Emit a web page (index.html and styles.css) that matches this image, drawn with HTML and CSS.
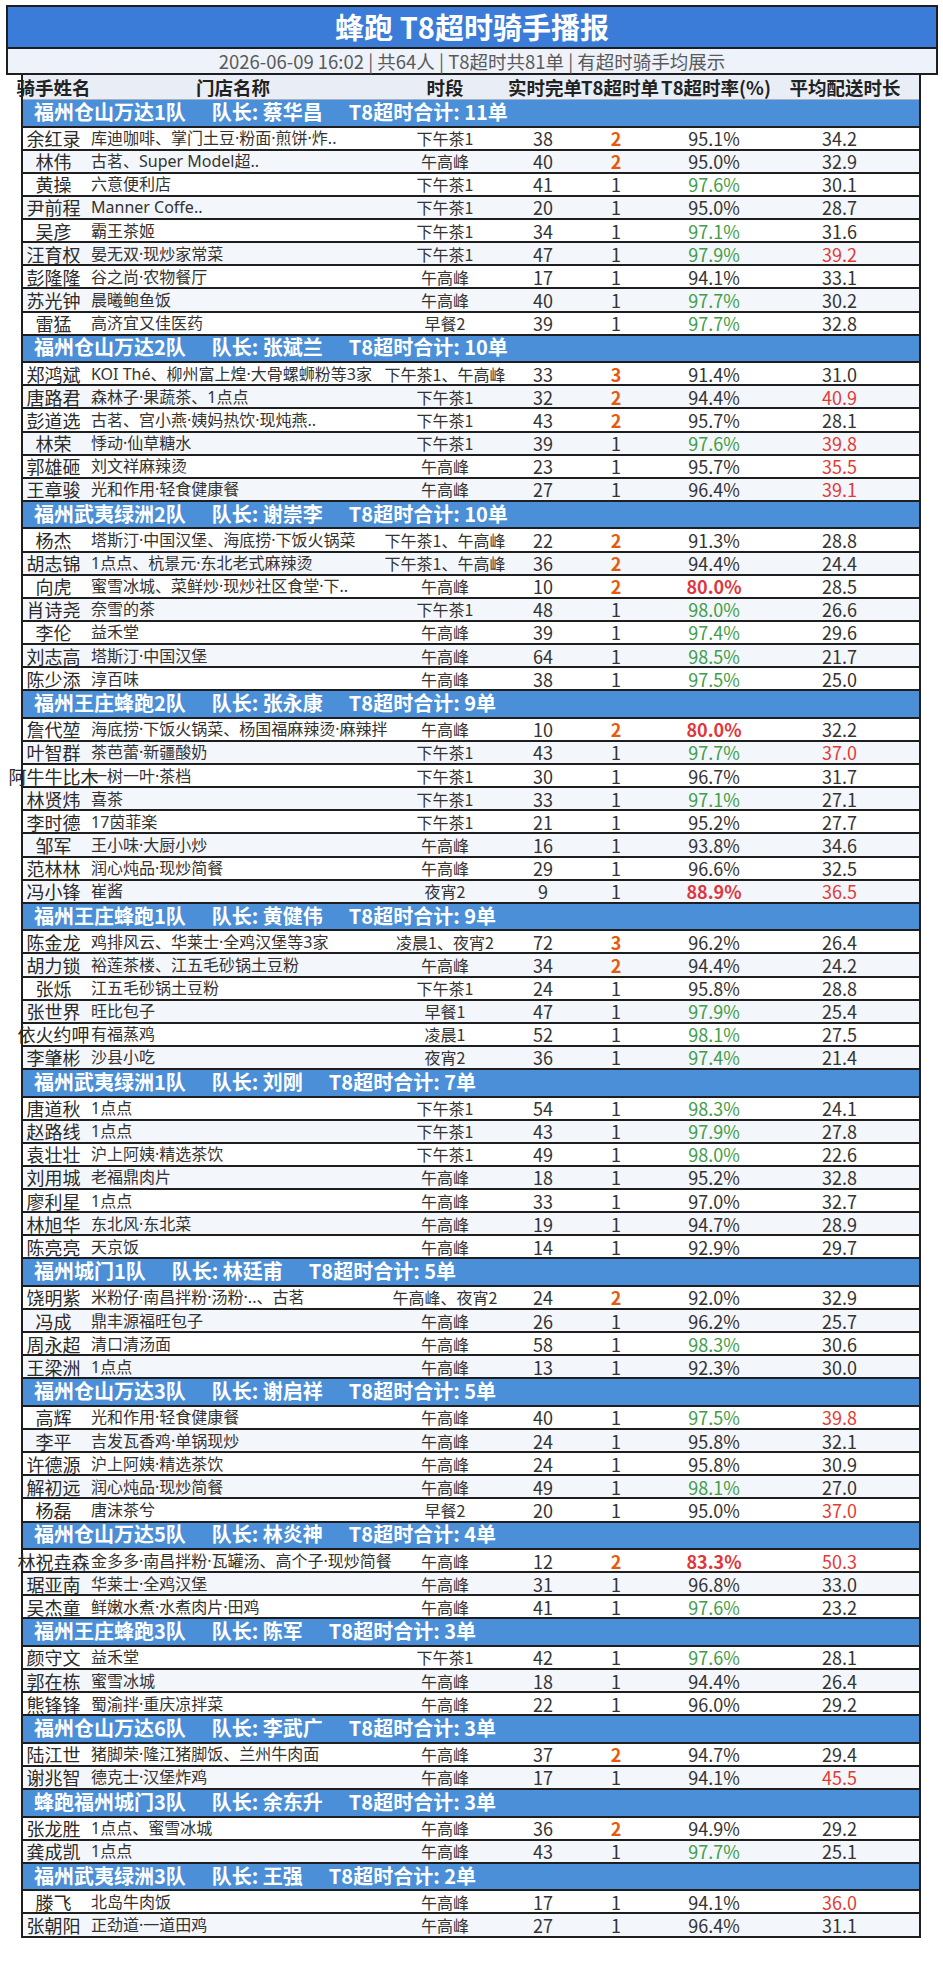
FILE: index.html
```html
<!DOCTYPE html>
<html lang="zh-CN">
<head>
<meta charset="utf-8">
<title>蜂跑 T8超时骑手播报</title>
<link rel="stylesheet" href="styles.css">
</head>
<body>
<div class="report">
  <div class="banner">
    <div class="title">蜂跑 T8超时骑手播报</div>
    <div class="subtitle">2026-06-09 16:02 | 共64人 | T8超时共81单 | 有超时骑手均展示</div>
  </div>
  <div class="table">
    <div class="head">
      <span class="h">骑手姓名</span><span class="h">门店名称</span><span class="h">时段</span><span class="h">实时完单</span><span class="h">T8超时单</span><span class="h">T8超时率(%)</span><span class="h">平均配送时长</span>
    </div>

    <div class="group"><span>福州仓山万达1队</span><span>队长: 蔡华昌</span><span>T8超时合计: 11单</span></div>
    <div class="row"><span class="c name">余红录</span><span class="c store">库迪咖啡、掌门土豆·粉面·煎饼·炸..</span><span class="c time">下午茶1</span><span class="c">38</span><span class="c hi">2</span><span class="c">95.1%</span><span class="c">34.2</span></div>
    <div class="row alt"><span class="c name">林伟</span><span class="c store">古茗、Super Model超..</span><span class="c time">午高峰</span><span class="c">40</span><span class="c hi">2</span><span class="c">95.0%</span><span class="c">32.9</span></div>
    <div class="row"><span class="c name">黄操</span><span class="c store">六意便利店</span><span class="c time">下午茶1</span><span class="c">41</span><span class="c">1</span><span class="c g">97.6%</span><span class="c">30.1</span></div>
    <div class="row alt"><span class="c name">尹前程</span><span class="c store">Manner Coffe..</span><span class="c time">下午茶1</span><span class="c">20</span><span class="c">1</span><span class="c">95.0%</span><span class="c">28.7</span></div>
    <div class="row"><span class="c name">吴彦</span><span class="c store">霸王茶姬</span><span class="c time">下午茶1</span><span class="c">34</span><span class="c">1</span><span class="c g">97.1%</span><span class="c">31.6</span></div>
    <div class="row alt"><span class="c name">汪育权</span><span class="c store">晏无双·现炒家常菜</span><span class="c time">下午茶1</span><span class="c">47</span><span class="c">1</span><span class="c g">97.9%</span><span class="c late">39.2</span></div>
    <div class="row"><span class="c name">彭隆隆</span><span class="c store">谷之尚·农物餐厅</span><span class="c time">午高峰</span><span class="c">17</span><span class="c">1</span><span class="c">94.1%</span><span class="c">33.1</span></div>
    <div class="row alt"><span class="c name">苏光钟</span><span class="c store">晨曦鲍鱼饭</span><span class="c time">午高峰</span><span class="c">40</span><span class="c">1</span><span class="c g">97.7%</span><span class="c">30.2</span></div>
    <div class="row"><span class="c name">雷猛</span><span class="c store">高济宜又佳医药</span><span class="c time">早餐2</span><span class="c">39</span><span class="c">1</span><span class="c g">97.7%</span><span class="c">32.8</span></div>

    <div class="group"><span>福州仓山万达2队</span><span>队长: 张斌兰</span><span>T8超时合计: 10单</span></div>
    <div class="row"><span class="c name">郑鸿斌</span><span class="c store">KOI Thé、柳州富上煌·大骨螺蛳粉等3家</span><span class="c time">下午茶1、午高峰</span><span class="c">33</span><span class="c hi">3</span><span class="c">91.4%</span><span class="c">31.0</span></div>
    <div class="row alt"><span class="c name">唐路君</span><span class="c store">森林子·果蔬茶、1点点</span><span class="c time">下午茶1</span><span class="c">32</span><span class="c hi">2</span><span class="c">94.4%</span><span class="c late">40.9</span></div>
    <div class="row"><span class="c name">彭道选</span><span class="c store">古茗、宫小燕·姨妈热饮·现炖燕..</span><span class="c time">下午茶1</span><span class="c">43</span><span class="c hi">2</span><span class="c">95.7%</span><span class="c">28.1</span></div>
    <div class="row alt"><span class="c name">林荣</span><span class="c store">悸动·仙草糖水</span><span class="c time">下午茶1</span><span class="c">39</span><span class="c">1</span><span class="c g">97.6%</span><span class="c late">39.8</span></div>
    <div class="row"><span class="c name">郭雄砸</span><span class="c store">刘文祥麻辣烫</span><span class="c time">午高峰</span><span class="c">23</span><span class="c">1</span><span class="c">95.7%</span><span class="c late">35.5</span></div>
    <div class="row alt"><span class="c name">王章骏</span><span class="c store">光和作用·轻食健康餐</span><span class="c time">午高峰</span><span class="c">27</span><span class="c">1</span><span class="c">96.4%</span><span class="c late">39.1</span></div>

    <div class="group"><span>福州武夷绿洲2队</span><span>队长: 谢崇李</span><span>T8超时合计: 10单</span></div>
    <div class="row"><span class="c name">杨杰</span><span class="c store">塔斯汀·中国汉堡、海底捞·下饭火锅菜</span><span class="c time">下午茶1、午高峰</span><span class="c">22</span><span class="c hi">2</span><span class="c">91.3%</span><span class="c">28.8</span></div>
    <div class="row alt"><span class="c name">胡志锦</span><span class="c store">1点点、杭景元·东北老式麻辣烫</span><span class="c time">下午茶1、午高峰</span><span class="c">36</span><span class="c hi">2</span><span class="c">94.4%</span><span class="c">24.4</span></div>
    <div class="row"><span class="c name">向虎</span><span class="c store">蜜雪冰城、菜鲜炒·现炒社区食堂·下..</span><span class="c time">午高峰</span><span class="c">10</span><span class="c hi">2</span><span class="c bad">80.0%</span><span class="c">28.5</span></div>
    <div class="row alt"><span class="c name">肖诗尧</span><span class="c store">奈雪的茶</span><span class="c time">下午茶1</span><span class="c">48</span><span class="c">1</span><span class="c g">98.0%</span><span class="c">26.6</span></div>
    <div class="row"><span class="c name">李伦</span><span class="c store">益禾堂</span><span class="c time">午高峰</span><span class="c">39</span><span class="c">1</span><span class="c g">97.4%</span><span class="c">29.6</span></div>
    <div class="row alt"><span class="c name">刘志高</span><span class="c store">塔斯汀·中国汉堡</span><span class="c time">午高峰</span><span class="c">64</span><span class="c">1</span><span class="c g">98.5%</span><span class="c">21.7</span></div>
    <div class="row"><span class="c name">陈少添</span><span class="c store">淳百味</span><span class="c time">午高峰</span><span class="c">38</span><span class="c">1</span><span class="c g">97.5%</span><span class="c">25.0</span></div>

    <div class="group"><span>福州王庄蜂跑2队</span><span>队长: 张永康</span><span>T8超时合计: 9单</span></div>
    <div class="row"><span class="c name">詹代堃</span><span class="c store">海底捞·下饭火锅菜、杨国福麻辣烫·麻辣拌</span><span class="c time">午高峰</span><span class="c">10</span><span class="c hi">2</span><span class="c bad">80.0%</span><span class="c">32.2</span></div>
    <div class="row alt"><span class="c name">叶智群</span><span class="c store">茶芭蕾·新疆酸奶</span><span class="c time">下午茶1</span><span class="c">43</span><span class="c">1</span><span class="c g">97.7%</span><span class="c late">37.0</span></div>
    <div class="row"><span class="c name">阿牛牛比木</span><span class="c store">一树一叶·茶档</span><span class="c time">下午茶1</span><span class="c">30</span><span class="c">1</span><span class="c">96.7%</span><span class="c">31.7</span></div>
    <div class="row alt"><span class="c name">林贤炜</span><span class="c store">喜茶</span><span class="c time">下午茶1</span><span class="c">33</span><span class="c">1</span><span class="c g">97.1%</span><span class="c">27.1</span></div>
    <div class="row"><span class="c name">李时德</span><span class="c store">17茵菲楽</span><span class="c time">下午茶1</span><span class="c">21</span><span class="c">1</span><span class="c">95.2%</span><span class="c">27.7</span></div>
    <div class="row alt"><span class="c name">邹军</span><span class="c store">王小味·大厨小炒</span><span class="c time">午高峰</span><span class="c">16</span><span class="c">1</span><span class="c">93.8%</span><span class="c">34.6</span></div>
    <div class="row"><span class="c name">范林林</span><span class="c store">润心炖品·现炒简餐</span><span class="c time">午高峰</span><span class="c">29</span><span class="c">1</span><span class="c">96.6%</span><span class="c">32.5</span></div>
    <div class="row alt"><span class="c name">冯小锋</span><span class="c store">崔酱</span><span class="c time">夜宵2</span><span class="c">9</span><span class="c">1</span><span class="c bad">88.9%</span><span class="c late">36.5</span></div>

    <div class="group"><span>福州王庄蜂跑1队</span><span>队长: 黄健伟</span><span>T8超时合计: 9单</span></div>
    <div class="row"><span class="c name">陈金龙</span><span class="c store">鸡排风云、华莱士·全鸡汉堡等3家</span><span class="c time">凌晨1、夜宵2</span><span class="c">72</span><span class="c hi">3</span><span class="c">96.2%</span><span class="c">26.4</span></div>
    <div class="row alt"><span class="c name">胡力锁</span><span class="c store">裕莲茶楼、江五毛砂锅土豆粉</span><span class="c time">午高峰</span><span class="c">34</span><span class="c hi">2</span><span class="c">94.4%</span><span class="c">24.2</span></div>
    <div class="row"><span class="c name">张烁</span><span class="c store">江五毛砂锅土豆粉</span><span class="c time">下午茶1</span><span class="c">24</span><span class="c">1</span><span class="c">95.8%</span><span class="c">28.8</span></div>
    <div class="row alt"><span class="c name">张世界</span><span class="c store">旺比包子</span><span class="c time">早餐1</span><span class="c">47</span><span class="c">1</span><span class="c g">97.9%</span><span class="c">25.4</span></div>
    <div class="row"><span class="c name">依火约呷</span><span class="c store">有福蒸鸡</span><span class="c time">凌晨1</span><span class="c">52</span><span class="c">1</span><span class="c g">98.1%</span><span class="c">27.5</span></div>
    <div class="row alt"><span class="c name">李肇彬</span><span class="c store">沙县小吃</span><span class="c time">夜宵2</span><span class="c">36</span><span class="c">1</span><span class="c g">97.4%</span><span class="c">21.4</span></div>

    <div class="group"><span>福州武夷绿洲1队</span><span>队长: 刘刚</span><span>T8超时合计: 7单</span></div>
    <div class="row"><span class="c name">唐道秋</span><span class="c store">1点点</span><span class="c time">下午茶1</span><span class="c">54</span><span class="c">1</span><span class="c g">98.3%</span><span class="c">24.1</span></div>
    <div class="row alt"><span class="c name">赵路线</span><span class="c store">1点点</span><span class="c time">下午茶1</span><span class="c">43</span><span class="c">1</span><span class="c g">97.9%</span><span class="c">27.8</span></div>
    <div class="row"><span class="c name">袁壮壮</span><span class="c store">沪上阿姨·精选茶饮</span><span class="c time">下午茶1</span><span class="c">49</span><span class="c">1</span><span class="c g">98.0%</span><span class="c">22.6</span></div>
    <div class="row alt"><span class="c name">刘用城</span><span class="c store">老福鼎肉片</span><span class="c time">午高峰</span><span class="c">18</span><span class="c">1</span><span class="c">95.2%</span><span class="c">32.8</span></div>
    <div class="row"><span class="c name">廖利星</span><span class="c store">1点点</span><span class="c time">午高峰</span><span class="c">33</span><span class="c">1</span><span class="c">97.0%</span><span class="c">32.7</span></div>
    <div class="row alt"><span class="c name">林旭华</span><span class="c store">东北风·东北菜</span><span class="c time">午高峰</span><span class="c">19</span><span class="c">1</span><span class="c">94.7%</span><span class="c">28.9</span></div>
    <div class="row"><span class="c name">陈亮亮</span><span class="c store">天京饭</span><span class="c time">午高峰</span><span class="c">14</span><span class="c">1</span><span class="c">92.9%</span><span class="c">29.7</span></div>

    <div class="group"><span>福州城门1队</span><span>队长: 林廷甫</span><span>T8超时合计: 5单</span></div>
    <div class="row"><span class="c name">饶明紫</span><span class="c store">米粉仔·南昌拌粉·汤粉·..、古茗</span><span class="c time">午高峰、夜宵2</span><span class="c">24</span><span class="c hi">2</span><span class="c">92.0%</span><span class="c">32.9</span></div>
    <div class="row alt"><span class="c name">冯成</span><span class="c store">鼎丰源福旺包子</span><span class="c time">午高峰</span><span class="c">26</span><span class="c">1</span><span class="c">96.2%</span><span class="c">25.7</span></div>
    <div class="row"><span class="c name">周永超</span><span class="c store">清口清汤面</span><span class="c time">午高峰</span><span class="c">58</span><span class="c">1</span><span class="c g">98.3%</span><span class="c">30.6</span></div>
    <div class="row alt"><span class="c name">王梁洲</span><span class="c store">1点点</span><span class="c time">午高峰</span><span class="c">13</span><span class="c">1</span><span class="c">92.3%</span><span class="c">30.0</span></div>

    <div class="group"><span>福州仓山万达3队</span><span>队长: 谢启祥</span><span>T8超时合计: 5单</span></div>
    <div class="row"><span class="c name">高辉</span><span class="c store">光和作用·轻食健康餐</span><span class="c time">午高峰</span><span class="c">40</span><span class="c">1</span><span class="c g">97.5%</span><span class="c late">39.8</span></div>
    <div class="row alt"><span class="c name">李平</span><span class="c store">吉发瓦香鸡·单锅现炒</span><span class="c time">午高峰</span><span class="c">24</span><span class="c">1</span><span class="c">95.8%</span><span class="c">32.1</span></div>
    <div class="row"><span class="c name">许德源</span><span class="c store">沪上阿姨·精选茶饮</span><span class="c time">午高峰</span><span class="c">24</span><span class="c">1</span><span class="c">95.8%</span><span class="c">30.9</span></div>
    <div class="row alt"><span class="c name">解初远</span><span class="c store">润心炖品·现炒简餐</span><span class="c time">午高峰</span><span class="c">49</span><span class="c">1</span><span class="c g">98.1%</span><span class="c">27.0</span></div>
    <div class="row"><span class="c name">杨磊</span><span class="c store">唐沫茶兮</span><span class="c time">早餐2</span><span class="c">20</span><span class="c">1</span><span class="c">95.0%</span><span class="c late">37.0</span></div>

    <div class="group"><span>福州仓山万达5队</span><span>队长: 林炎神</span><span>T8超时合计: 4单</span></div>
    <div class="row"><span class="c name">林祝垚森</span><span class="c store">金多多·南昌拌粉·瓦罐汤、高个子·现炒简餐</span><span class="c time">午高峰</span><span class="c">12</span><span class="c hi">2</span><span class="c bad">83.3%</span><span class="c late">50.3</span></div>
    <div class="row alt"><span class="c name">琚亚南</span><span class="c store">华莱士·全鸡汉堡</span><span class="c time">午高峰</span><span class="c">31</span><span class="c">1</span><span class="c">96.8%</span><span class="c">33.0</span></div>
    <div class="row"><span class="c name">吴杰童</span><span class="c store">鲜嫩水煮·水煮肉片·田鸡</span><span class="c time">午高峰</span><span class="c">41</span><span class="c">1</span><span class="c g">97.6%</span><span class="c">23.2</span></div>

    <div class="group"><span>福州王庄蜂跑3队</span><span>队长: 陈军</span><span>T8超时合计: 3单</span></div>
    <div class="row"><span class="c name">颜守文</span><span class="c store">益禾堂</span><span class="c time">下午茶1</span><span class="c">42</span><span class="c">1</span><span class="c g">97.6%</span><span class="c">28.1</span></div>
    <div class="row alt"><span class="c name">郭在栋</span><span class="c store">蜜雪冰城</span><span class="c time">午高峰</span><span class="c">18</span><span class="c">1</span><span class="c">94.4%</span><span class="c">26.4</span></div>
    <div class="row"><span class="c name">熊锋锋</span><span class="c store">蜀渝拌·重庆凉拌菜</span><span class="c time">午高峰</span><span class="c">22</span><span class="c">1</span><span class="c">96.0%</span><span class="c">29.2</span></div>

    <div class="group"><span>福州仓山万达6队</span><span>队长: 李武广</span><span>T8超时合计: 3单</span></div>
    <div class="row"><span class="c name">陆江世</span><span class="c store">猪脚荣·隆江猪脚饭、兰州牛肉面</span><span class="c time">午高峰</span><span class="c">37</span><span class="c hi">2</span><span class="c">94.7%</span><span class="c">29.4</span></div>
    <div class="row alt"><span class="c name">谢兆智</span><span class="c store">德克士·汉堡炸鸡</span><span class="c time">午高峰</span><span class="c">17</span><span class="c">1</span><span class="c">94.1%</span><span class="c late">45.5</span></div>

    <div class="group"><span>蜂跑福州城门3队</span><span>队长: 余东升</span><span>T8超时合计: 3单</span></div>
    <div class="row"><span class="c name">张龙胜</span><span class="c store">1点点、蜜雪冰城</span><span class="c time">午高峰</span><span class="c">36</span><span class="c hi">2</span><span class="c">94.9%</span><span class="c">29.2</span></div>
    <div class="row alt"><span class="c name">龚成凯</span><span class="c store">1点点</span><span class="c time">午高峰</span><span class="c">43</span><span class="c">1</span><span class="c g">97.7%</span><span class="c">25.1</span></div>

    <div class="group"><span>福州武夷绿洲3队</span><span>队长: 王强</span><span>T8超时合计: 2单</span></div>
    <div class="row"><span class="c name">滕飞</span><span class="c store">北岛牛肉饭</span><span class="c time">午高峰</span><span class="c">17</span><span class="c">1</span><span class="c">94.1%</span><span class="c late">36.0</span></div>
    <div class="row alt"><span class="c name">张朝阳</span><span class="c store">正劲道·一道田鸡</span><span class="c time">午高峰</span><span class="c">27</span><span class="c">1</span><span class="c">96.4%</span><span class="c">31.1</span></div>
  </div>
</div>
</body>
</html>
```

FILE: styles.css
```css
* { box-sizing: border-box; }

html, body {
  margin: 0;
  padding: 0;
  background: #ffffff;
}

body {
  font-family: "Noto Sans CJK SC", "Noto Sans", sans-serif;
  color: #333333;
}

.report {
  padding-top: 5px;
}

.banner {
  margin-left: 6px;
  width: 932px;
  border: 2px solid #1e1e1e;
}

.title {
  height: 42px;
  display: flex;
  align-items: center;
  justify-content: center;
  background: #3a7cd8;
  color: #ffffff;
  font-weight: 700;
  font-size: 29px;
  line-height: 1;
  border-bottom: 2px solid #1e1e1e;
  padding-bottom: 2px;
}

.subtitle {
  height: 24px;
  display: flex;
  align-items: center;
  justify-content: center;
  background: #eef2fa;
  color: #5a5a5a;
  font-size: 18.5px;
  line-height: 1;
}

.table {
  margin-left: 21px;
  width: 900px;
  border-left: 2px solid #1e1e1e;
  border-right: 2px solid #1e1e1e;
}

.head,
.row {
  display: grid;
  grid-template-columns: 61px 298px 126px 70px 76px 120px 131px 14px;
  align-items: stretch;
}

.head {
  height: 25px;
  background: #e9eef6;
  border-bottom: 1px solid #aab2bf;
  grid-template-columns: 61px 298px 126px 74px 76px 116px 142px 3px;
}

.h,
.c {
  display: flex;
  align-items: center;
  justify-content: center;
  white-space: nowrap;
  min-width: 0;
  line-height: 1;
}

.h {
  font-weight: 700;
  font-size: 18.5px;
  color: #222222;
}

.group {
  height: 27.5px;
  display: flex;
  align-items: center;
  gap: 26px;
  padding-left: 11px;
  padding-bottom: 2px;
  background: #4a8fd8;
  color: #ffffff;
  font-weight: 700;
  font-size: 20px;
  line-height: 1;
  border-bottom: 2px solid #1e1e1e;
  white-space: nowrap;
}

.row {
  height: 23.13px;
  background: #ffffff;
  border-bottom: 2px solid #1e1e1e;
  font-size: 18px;
  color: #333333;
}

.row.alt {
  background: #f3f6fb;
}

.c.name {
  color: #2a2a2a;
}

.c.store {
  justify-content: flex-start;
  padding-left: 7px;
  font-family: "Noto Sans", "Noto Sans CJK SC", sans-serif;
  font-size: 16px;
}

.c.time {
  font-size: 16px;
}

.c.hi {
  color: #e8590c;
  font-weight: 700;
}

.c.g {
  color: #3f9e47;
}

.c.bad {
  color: #e0363a;
  font-weight: 700;
}

.c.late {
  color: #e53935;
}
```
